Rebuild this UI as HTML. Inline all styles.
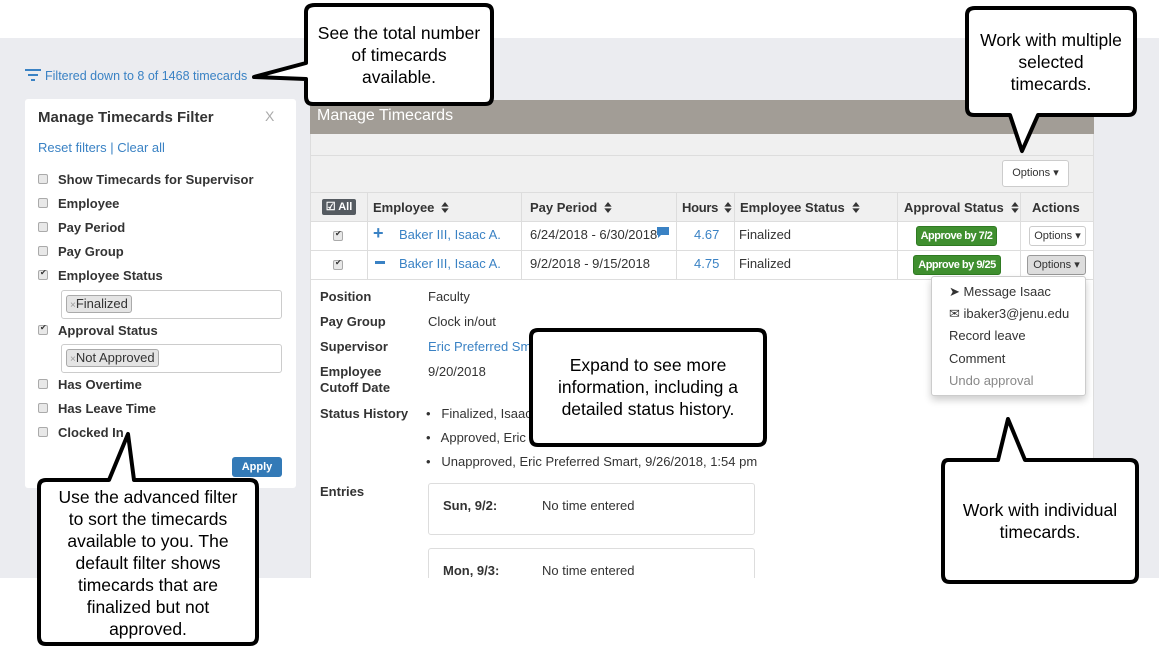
<!DOCTYPE html>
<html><head><meta charset="utf-8"><style>
*{box-sizing:border-box;margin:0;padding:0}
body{width:1159px;height:649px;position:relative;overflow:hidden;background:#fff;font-family:"Liberation Sans",Arial,sans-serif;font-size:13px;color:#333}
.a{position:absolute;white-space:nowrap}
.bl{color:#3a82c4}
.cb{position:absolute;width:10px;height:10px;border:1px solid #aaa;border-radius:2px;background:#e8e8e8}
.ck::after{content:"✔";position:absolute;left:1px;top:-3px;font-size:8px;color:#333}
.fl{position:absolute;left:58px;font-weight:bold;font-size:13px;color:#333;white-space:nowrap}
.th{position:absolute;top:200px;font-weight:bold;font-size:13px;white-space:nowrap}
.sort{display:inline-block;width:8px;height:11px;margin-left:7px;vertical-align:-1px}
.vl{position:absolute;width:1px;background:#ddd}
.hl{position:absolute;height:1px;background:#ddd}
.btn{position:absolute;border:1px solid #ccc;border-radius:3px;background:#fff;font-size:11px;text-align:center;white-space:nowrap}
.green{position:absolute;background:#3f8f2f;border:1px solid #2f7a22;color:#fff;font-weight:bold;font-size:11px;letter-spacing:-0.5px;border-radius:3px;text-align:center;line-height:18px;white-space:nowrap}
.lab{position:absolute;left:320px;font-weight:bold;white-space:nowrap}
.val{position:absolute;left:428px;white-space:nowrap}
.co{position:absolute;text-align:center;font-size:17.5px;color:#000;line-height:22px;white-space:nowrap}
</style></head><body>
<div class="a" style="left:0;top:38px;width:1159px;height:540px;background:#ebecf0"></div>

<svg class="a" style="left:25px;top:68px" width="16" height="14"><rect x="0" y="1" width="16" height="2" fill="#3a82c4"/><rect x="3" y="6" width="10" height="2" fill="#3a82c4"/><rect x="6" y="11" width="4" height="2" fill="#3a82c4"/></svg>
<div class="a bl" style="left:45px;top:69px;font-size:12.5px">Filtered down to 8 of 1468 timecards</div>

<div class="a" style="left:25px;top:99px;width:271px;height:389px;background:#fff;border-radius:3px"></div>
<div class="a" style="left:38px;top:109px;font-weight:bold;font-size:15px">Manage Timecards Filter</div>
<div class="a" style="left:265px;top:108px;color:#aaa;font-size:14px">X</div>
<div class="a bl" style="left:38px;top:140px;font-size:13px">Reset filters | Clear all</div>
<div class="cb" style="left:38px;top:174px"></div><div class="fl" style="top:172px">Show Timecards for Supervisor</div>
<div class="cb" style="left:38px;top:198px"></div><div class="fl" style="top:196px">Employee</div>
<div class="cb" style="left:38px;top:222px"></div><div class="fl" style="top:220px">Pay Period</div>
<div class="cb" style="left:38px;top:246px"></div><div class="fl" style="top:244px">Pay Group</div>
<div class="cb ck" style="left:38px;top:270px"></div><div class="fl" style="top:268px">Employee Status</div>
<div class="a" style="left:61px;top:290px;width:221px;height:29px;border:1px solid #ccc;border-radius:3px"></div>
<div class="a" style="left:66px;top:295px;padding:0 3px;height:18px;line-height:16px;background:#e4e4e4;border:1px solid #aaa;border-radius:3px"><span style="color:#999;font-size:10px">×</span>Finalized</div>
<div class="cb ck" style="left:38px;top:325px"></div><div class="fl" style="top:323px">Approval Status</div>
<div class="a" style="left:61px;top:344px;width:221px;height:29px;border:1px solid #ccc;border-radius:3px"></div>
<div class="a" style="left:66px;top:349px;padding:0 3px;height:18px;line-height:16px;background:#e4e4e4;border:1px solid #aaa;border-radius:3px"><span style="color:#999;font-size:10px">×</span>Not Approved</div>
<div class="cb" style="left:38px;top:379px"></div><div class="fl" style="top:377px">Has Overtime</div>
<div class="cb" style="left:38px;top:403px"></div><div class="fl" style="top:401px">Has Leave Time</div>
<div class="cb" style="left:38px;top:427px"></div><div class="fl" style="top:425px">Clocked In</div>
<div class="a" style="left:232px;top:457px;width:50px;height:20px;background:#337ab7;border-radius:3px;color:#fff;font-weight:bold;font-size:11px;text-align:center;line-height:20px">Apply</div>

<div class="a" style="left:310px;top:100px;width:784px;height:478px;background:#fff"></div>
<div class="a" style="left:310px;top:100px;width:784px;height:34px;background:#a29d96"></div>
<div class="a" style="left:317px;top:107px;color:#fff;font-size:16px">Manage Timecards</div>
<div class="a" style="left:310px;top:134px;width:783px;height:87px;background:#f0f0f0"></div>
<div class="hl" style="left:310px;top:155px;width:783px"></div>
<div class="hl" style="left:310px;top:192px;width:783px"></div>
<div class="btn" style="left:1002px;top:160px;width:67px;height:27px;line-height:25px">Options ▾</div>
<div class="a" style="left:322px;top:199px;width:34px;height:16px;background:#555b61;border-radius:2px;color:#fff;font-weight:bold;font-size:11px;line-height:16px;text-align:center">☑ All</div>
<svg width="0" height="0" style="position:absolute"><defs><g id="s"><path d="M0,5 L4,0 L8,5Z M0,7 L4,12 L8,7Z" fill="#333"/></g></defs></svg>
<div class="th" style="left:373px">Employee<svg class="sort" viewBox="0 0 8 12"><use href="#s"/></svg></div>
<div class="th" style="left:530px">Pay Period<svg class="sort" viewBox="0 0 8 12"><use href="#s"/></svg></div>
<div class="th" style="left:682px;letter-spacing:-0.3px">Hours<svg class="sort" viewBox="0 0 8 12" style="margin-left:6px"><use href="#s"/></svg></div>
<div class="th" style="left:740px">Employee Status<svg class="sort" viewBox="0 0 8 12"><use href="#s"/></svg></div>
<div class="th" style="left:904px">Approval Status<svg class="sort" viewBox="0 0 8 12"><use href="#s"/></svg></div>
<div class="th" style="left:1032px">Actions</div>
<div class="hl" style="left:310px;top:221px;width:783px"></div>
<div class="hl" style="left:310px;top:250px;width:783px"></div>
<div class="hl" style="left:310px;top:279px;width:783px"></div>
<div class="vl" style="left:367px;top:192px;height:87px"></div>
<div class="vl" style="left:521px;top:192px;height:87px"></div>
<div class="vl" style="left:676px;top:192px;height:87px"></div>
<div class="vl" style="left:734px;top:192px;height:87px"></div>
<div class="vl" style="left:897px;top:192px;height:87px"></div>
<div class="vl" style="left:1020px;top:192px;height:87px"></div>
<div class="vl" style="left:1093px;top:134px;height:444px"></div>
<div class="vl" style="left:310px;top:134px;height:444px"></div>

<div class="cb ck" style="left:333px;top:231px"></div>
<div class="a" style="left:373px;top:223px;color:#3a82c4;font-weight:bold;font-size:18px">+</div>
<div class="a bl" style="left:399px;top:227px">Baker III, Isaac A.</div>
<div class="a" style="left:530px;top:227px">6/24/2018 - 6/30/2018</div>
<svg class="a" style="left:656px;top:226px" width="14" height="13"><path d="M1,1 H13 V9 H5 L2,12 V9 H1Z" fill="#3a82c4"/></svg>
<div class="a bl" style="left:694px;top:227px">4.67</div>
<div class="a" style="left:739px;top:227px">Finalized</div>
<div class="green" style="left:916px;top:226px;width:81px">Approve by 7/2</div>
<div class="btn" style="left:1029px;top:226px;width:57px;height:20px;line-height:18px">Options ▾</div>

<div class="cb ck" style="left:333px;top:260px"></div>
<div class="a" style="left:375px;top:261px;width:10px;height:3px;background:#3a82c4"></div>
<div class="a bl" style="left:399px;top:256px">Baker III, Isaac A.</div>
<div class="a" style="left:530px;top:256px">9/2/2018 - 9/15/2018</div>
<div class="a bl" style="left:694px;top:256px">4.75</div>
<div class="a" style="left:739px;top:256px">Finalized</div>
<div class="green" style="left:913px;top:255px;width:88px">Approve by 9/25</div>
<div class="btn" style="left:1027px;top:255px;width:59px;height:20px;line-height:18px;background:#ddd;border-color:#999">Options ▾</div>

<div class="lab" style="top:289px">Position</div><div class="val" style="top:289px">Faculty</div>
<div class="lab" style="top:314px">Pay Group</div><div class="val" style="top:314px">Clock in/out</div>
<div class="lab" style="top:339px">Supervisor</div><div class="val bl" style="top:339px">Eric Preferred Smart</div>
<div class="lab" style="top:364px;line-height:16px">Employee<br>Cutoff Date</div><div class="val" style="top:364px">9/20/2018</div>
<div class="lab" style="top:406px">Status History</div>
<div class="a" style="left:426px;top:406px">•&nbsp;&nbsp; Finalized, Isaac</div>
<div class="a" style="left:426px;top:430px">•&nbsp;&nbsp; Approved, Eric</div>
<div class="a" style="left:426px;top:454px">•&nbsp;&nbsp; Unapproved, Eric Preferred Smart, 9/26/2018, 1:54 pm</div>
<div class="lab" style="top:484px">Entries</div>
<div class="a" style="left:428px;top:483px;width:327px;height:52px;border:1px solid #ddd;border-radius:3px"></div>
<div class="a" style="left:443px;top:498px;font-weight:bold">Sun, 9/2:</div><div class="a" style="left:542px;top:498px">No time entered</div>
<div class="a" style="left:428px;top:548px;width:327px;height:30px;border:1px solid #ddd;border-bottom:none;border-radius:3px 3px 0 0"></div>
<div class="a" style="left:443px;top:563px;font-weight:bold">Mon, 9/3:</div><div class="a" style="left:542px;top:563px">No time entered</div>

<div class="a" style="left:931px;top:276px;width:155px;height:120px;background:#fff;border:1px solid #ccc;border-radius:3px;box-shadow:0 4px 8px rgba(0,0,0,.2)"></div>
<div class="a" style="left:949px;top:284px">➤ Message Isaac</div>
<div class="a" style="left:949px;top:306px">✉ ibaker3@jenu.edu</div>
<div class="a" style="left:949px;top:328px">Record leave</div>
<div class="a" style="left:949px;top:351px">Comment</div>
<div class="a" style="left:949px;top:373px;color:#888">Undo approval</div>

<svg class="a" style="left:0;top:0" width="1159" height="649">
<g fill="#fff" stroke="#000" stroke-width="4" stroke-linejoin="round">
<path d="M315,5 H485 Q492,5 492,12 V97 Q492,104 485,104 H313 Q306,104 306,97 V79 L254,77 L306,63 V12 Q306,5 315,5 Z"/>
<path d="M975,8 H1128 Q1135,8 1135,15 V108 Q1135,115 1128,115 H1038 L1022,151 L1010,115 H974 Q967,115 967,108 V15 Q967,8 975,8 Z"/>
<path d="M538,330 H758 Q765,330 765,337 V438 Q765,445 758,445 H538 Q531,445 531,438 V337 Q531,330 538,330 Z"/>
<path d="M948,460 H998 L1008,419 L1025,460 H1130 Q1137,460 1137,467 V575 Q1137,582 1130,582 H950 Q943,582 943,575 V467 Q943,460 948,460 Z"/>
<path d="M46,480 H109 L128,434 L134,480 H250 Q257,480 257,487 V637 Q257,644 250,644 H46 Q39,644 39,637 V487 Q39,480 46,480 Z"/>
</g></svg>
<div class="co" style="left:306px;top:22px;width:186px">See the total number<br>of timecards<br>available.</div>
<div class="co" style="left:967px;top:29px;width:168px">Work with multiple<br>selected<br>timecards.</div>
<div class="co" style="left:531px;top:354px;width:234px">Expand to see more<br>information, including a<br>detailed status history.</div>
<div class="co" style="left:943px;top:499px;width:194px">Work with individual<br>timecards.</div>
<div class="co" style="left:39px;top:486px;width:218px">Use the advanced filter<br>to sort the timecards<br>available to you. The<br>default filter shows<br>timecards that are<br>finalized but not<br>approved.</div>
</body></html>
